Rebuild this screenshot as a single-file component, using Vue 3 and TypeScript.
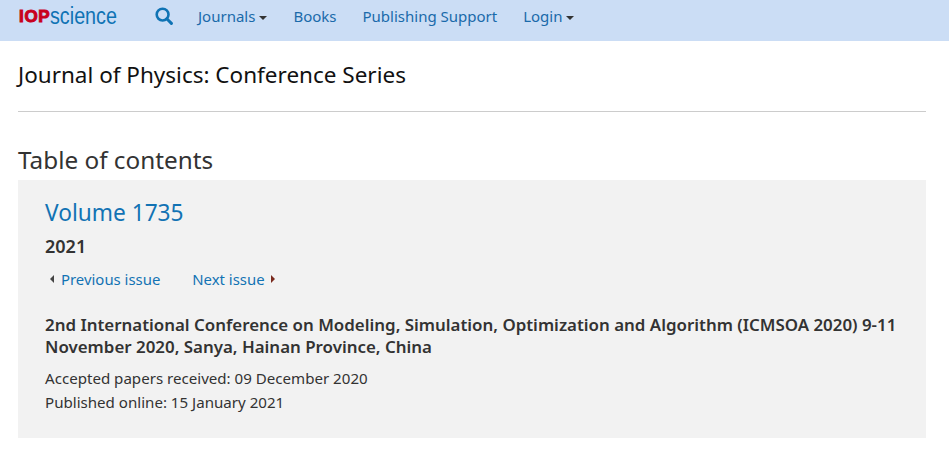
<script setup lang="ts">
const navItems = [
  { label: 'Journals', caret: true },
  { label: 'Books', caret: false },
  { label: 'Publishing Support', caret: false },
  { label: 'Login', caret: true },
]
</script>

<template>
  <div class="page">
    <header class="nav">
      <div class="logo"><span class="iop">IOP</span><span class="sci">science</span></div>
      <svg class="search" viewBox="0 0 18 18" width="18" height="18" aria-label="Search">
        <circle cx="7.6" cy="7.6" r="5.9" fill="none" stroke="#0f73b4" stroke-width="2.6" />
        <path d="M11.8 11.8 L16.4 16.4" stroke="#0f73b4" stroke-width="3" stroke-linecap="round" />
      </svg>
      <nav class="links">
        <a v-for="item in navItems" :key="item.label" class="link">
          {{ item.label }}<span v-if="item.caret" class="caret"></span>
        </a>
      </nav>
    </header>

    <main class="main">
      <h1 class="journal">Journal of Physics: Conference Series</h1>
      <hr class="rule" />
      <h2 class="toc">Table of contents</h2>
      <section class="card">
        <h3 class="volume">Volume 1735</h3>
        <div class="year">2021</div>
        <div class="issues">
          <a class="issue prev"><span class="tri tri-left"></span>Previous issue</a>
          <a class="issue next">Next issue<span class="tri tri-right"></span></a>
        </div>
        <p class="conf">2nd International Conference on Modeling, Simulation, Optimization and Algorithm (ICMSOA 2020) 9-11 November 2020, Sanya, Hainan Province, China</p>
        <p class="meta">Accepted papers received: 09 December 2020</p>
        <p class="meta">Published online: 15 January 2021</p>
      </section>
    </main>
  </div>
</template>

<style>
html, body { margin: 0; background: #fff; }
</style>

<style scoped>
.page {
  width: 949px;
  height: 457px;
  overflow: hidden;
  font-family: "Noto Sans", "Open Sans", sans-serif;
  color: #222;
}
.nav {
  height: 41px;
  background: #cbddf5;
  display: flex;
  align-items: flex-start;
  padding-left: 18px;
  box-sizing: border-box;
}
.logo {
  width: 137px;
  height: 32px;
  display: flex;
  align-items: center;
  white-space: nowrap;
}
.iop {
  font-family: "Liberation Sans", sans-serif;
  font-weight: 700;
  font-size: 17px;
  line-height: 17px;
  color: #c8001e;
  -webkit-text-stroke: 1px #c8001e;
  letter-spacing: 0.7px;
  margin-top: 1px;
  margin-left: 1px;
}
.sci {
  font-family: "Liberation Sans", sans-serif;
  font-size: 23.5px;
  color: #0f73b4;
  display: inline-block;
  transform: scaleX(0.84);
  transform-origin: left center;
}
.search { margin-top: 7px; }
.links {
  display: flex;
  gap: 26px;
  margin-left: 25px;
}
.link {
  font-size: 15px;
  line-height: 33px;
  color: #1a6aaa;
  white-space: nowrap;
}
.caret {
  display: inline-block;
  margin-left: 4px;
  vertical-align: 2px;
  border-top: 4px solid #333;
  border-left: 4px solid transparent;
  border-right: 4px solid transparent;
}
.main {
  padding: 0 23px 0 18px;
}
.journal {
  margin: 0;
  padding-top: 19px;
  height: 51px;
  font-size: 22.5px;
  line-height: 30px;
  font-weight: 400;
  color: #111;
}
.rule {
  margin: 0;
  border: 0;
  border-top: 1px solid #ccc;
}
.toc {
  margin: 0;
  padding-top: 30px;
  padding-bottom: 3px;
  font-size: 24.3px;
  line-height: 35px;
  font-weight: 400;
  color: #333;
}
.card {
  background: #f2f2f2;
  height: 258px;
  padding: 18px 24px 0 27px;
  box-sizing: border-box;
}
.volume {
  margin: 0;
  font-size: 22.7px;
  line-height: 30px;
  font-weight: 400;
  color: #1273b4;
}
.year {
  margin-top: 6px;
  font-size: 18px;
  line-height: 24px;
  font-weight: 600;
  color: #333;
}
.issues {
  display: flex;
  gap: 32px;
  margin-top: 9px;
  padding-left: 5px;
}
.issue {
  font-size: 14.9px;
  line-height: 24px;
  color: #1273b4;
  white-space: nowrap;
}
.tri {
  display: inline-block;
  vertical-align: 2px;
  border-top: 4px solid transparent;
  border-bottom: 4px solid transparent;
}
.tri-left { border-right: 4px solid #444; margin-right: 7px; }
.tri-right { border-left: 4px solid #7a2a1e; margin-left: 6px; }
.conf {
  margin: 23px 0 0;
  font-size: 16.9px;
  line-height: 22px;
  font-weight: 600;
  color: #333;
}
.meta {
  margin: 0;
  font-size: 15.1px;
  line-height: 24px;
  color: #333;
}
.conf + .meta { margin-top: 8px; }
</style>
